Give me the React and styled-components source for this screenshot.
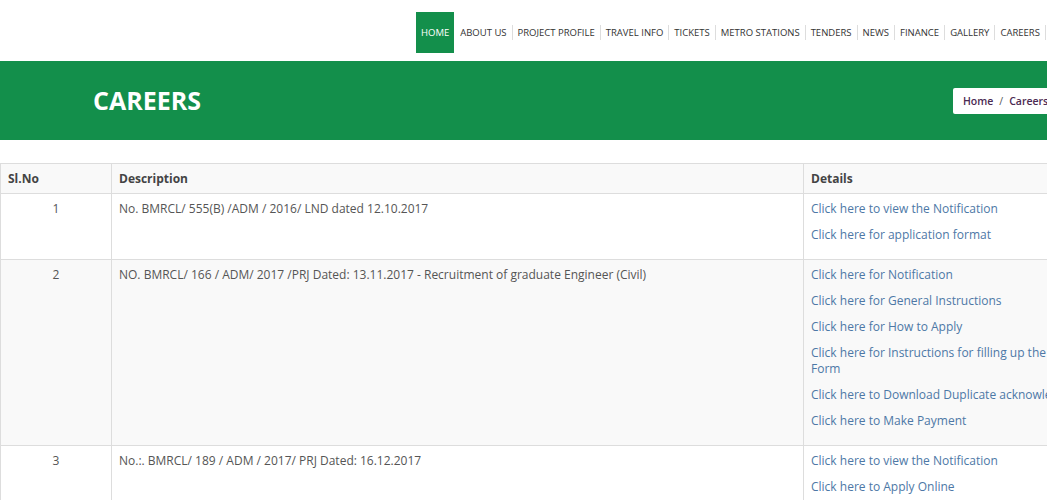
import React from 'react'
import styled, { createGlobalStyle } from 'styled-components'

const Global = createGlobalStyle`
  body {
    margin: 0;
    background: #fff;
    font-family: "Open Sans", "DejaVu Sans", sans-serif;
    overflow: hidden;
  }
`

const Page = styled.div`
  width: 1180px;
`

const Header = styled.div`
  height: 61px;
  padding: 12px 0 0 416px;
  box-sizing: border-box;
`

const Nav = styled.ul`
  display: flex;
  align-items: center;
  list-style: none;
  margin: 0;
  padding: 0;
  height: 41px;
`

const NavItem = styled.li`
  height: 41px;
  display: flex;
  align-items: center;
  padding: 0 5px 0 6px;
  font-size: 9.5px;
  color: ${p => (p.active ? '#fff' : '#333')};
  background: ${p => (p.active ? '#138f4b' : 'transparent')};
  position: relative;
  &:first-child { padding: 0 5px; }
  & + &::before,
  &:last-child::after {
    content: '';
    position: absolute;
    left: 0;
    top: 13px;
    height: 15px;
    border-left: 1px solid #ddd;
  }
  &:last-child::after {
    left: auto;
    right: -1px;
  }
`

const Banner = styled.div`
  background: #138f4b;
  height: 79px;
  display: flex;
  align-items: center;
  padding-left: 93px;
`

const Title = styled.h1`
  margin: 0 0 2px;
  color: #fff;
  font-size: 25px;
  font-weight: 700;
`

const Crumbs = styled.div`
  margin-left: 752px;
  background: #fff;
  height: 26px;
  display: flex;
  align-items: center;
  padding: 0 10px;
  font-size: 10.5px;
  font-weight: 600;
  color: #4b2a52;
  border-radius: 2px;
  white-space: nowrap;
  span { margin: 0 6px; color: #555; font-weight: 400; }
`

const Table = styled.table`
  margin-top: 23px;
  width: 1160px;
  border-collapse: collapse;
  font-size: 12px;
  color: #555;
  td, th {
    border: 1px solid #ddd;
    padding: 7px 7px 6px;
    line-height: 16px;
    vertical-align: top;
    text-align: left;
  }
  th {
    color: #444;
    font-weight: 700;
    background: #f9f9f9;
  }
`

const Row = styled.tr`
  background: ${p => (p.striped ? '#f9f9f9' : '#fff')};
`

const NoCell = styled.td`
  width: 96px;
  && { text-align: center; }
`

const DescCell = styled.td`
  width: 677px;
`

const LinkItem = styled.a`
  display: block;
  color: #4d78a6;
  text-decoration: none;
  margin-bottom: 10px;
  width: 240px;
  white-space: ${p => (p.nowrap ? 'nowrap' : 'normal')};
`

const navItems = ['HOME', 'ABOUT US', 'PROJECT PROFILE', 'TRAVEL INFO', 'TICKETS', 'METRO STATIONS', 'TENDERS', 'NEWS', 'FINANCE', 'GALLERY', 'CAREERS']

const rows = [
  {
    no: 1,
    desc: 'No. BMRCL/ 555(B) /ADM / 2016/ LND dated 12.10.2017',
    links: ['Click here to view the Notification', 'Click here for application format'],
  },
  {
    no: 2,
    desc: 'NO. BMRCL/ 166 / ADM/ 2017 /PRJ Dated: 13.11.2017 - Recruitment of graduate Engineer (Civil)',
    links: [
      'Click here for Notification',
      'Click here for General Instructions',
      'Click here for How to Apply',
      'Click here for Instructions for filling up the Form',
      'Click here to Download Duplicate acknowledgement',
      'Click here to Make Payment',
    ],
  },
  {
    no: 3,
    desc: 'No.:. BMRCL/ 189 / ADM / 2017/ PRJ Dated: 16.12.2017',
    links: ['Click here to view the Notification', 'Click here to Apply Online'],
  },
]

export default function App() {
  return (
    <Page>
      <Global />
      <Header>
        <Nav>
          {navItems.map((n, i) => (
            <NavItem key={n} active={i === 0}>{n}</NavItem>
          ))}
        </Nav>
      </Header>
      <Banner>
        <Title>CAREERS</Title>
        <Crumbs>Home<span>/</span>Careers</Crumbs>
      </Banner>
      <Table>
        <thead>
          <tr>
            <th>Sl.No</th>
            <th>Description</th>
            <th>Details</th>
          </tr>
        </thead>
        <tbody>
          {rows.map((r, i) => (
            <Row key={r.no} striped={i % 2 === 1}>
              <NoCell>{r.no}</NoCell>
              <DescCell>{r.desc}</DescCell>
              <td>
                {r.links.map(l => (
                  <LinkItem key={l} href="#" nowrap={l.includes('Duplicate')}>{l}</LinkItem>
                ))}
              </td>
            </Row>
          ))}
        </tbody>
      </Table>
    </Page>
  )
}
